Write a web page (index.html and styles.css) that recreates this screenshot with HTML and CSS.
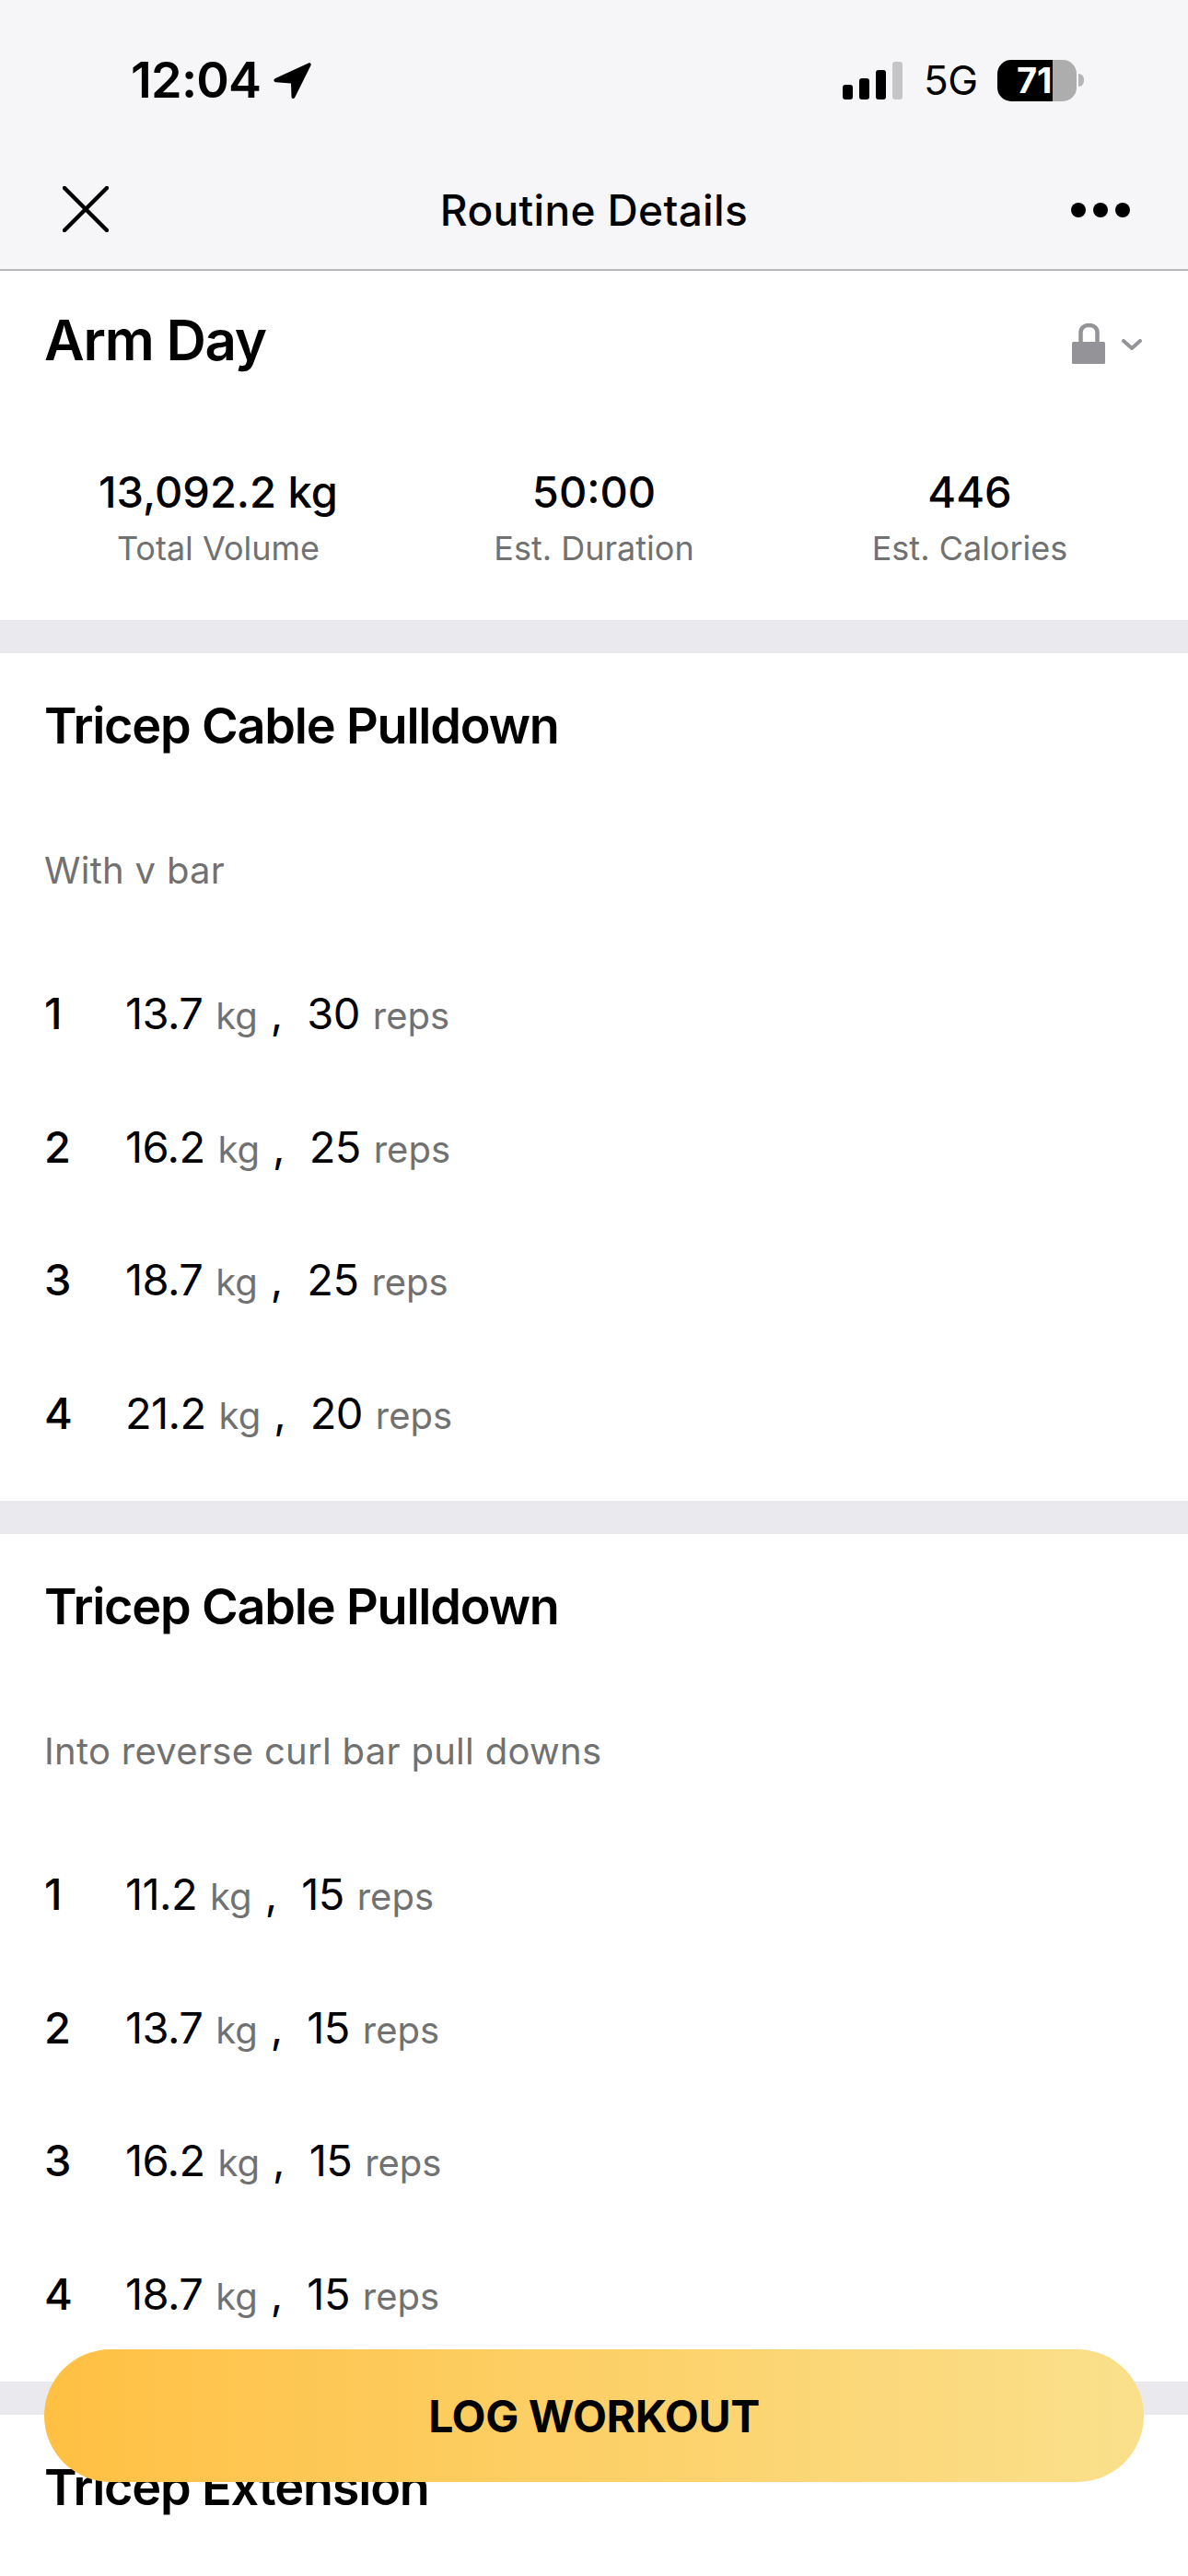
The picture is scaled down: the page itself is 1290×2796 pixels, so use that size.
FILE: index.html
```html
<!DOCTYPE html>
<html lang="en">
<head>
<meta charset="utf-8">
<title>Routine Details</title>
<link rel="stylesheet" href="styles.css">
</head>
<body>
<div class="screen">
  <header class="top">
    <div class="status">
      <div class="status-left">
        <span class="time">12:04</span>
        <svg class="loc" viewBox="0 0 42 40"><path d="M39 1.5 3 18c-2.5 1.200-2 4 .8 4.200L20 23.500l.5 14.500c.1 2.400 3 2.800 3.800.5L41.500 4c.7-2-.7-3.300-2.500-2.500Z"/></svg>
      </div>
      <div class="status-right">
        <svg class="signal" viewBox="0 0 65 41"><rect x="0" y="25" width="11" height="16" rx="3"/><rect x="18" y="18" width="11" height="23" rx="3"/><rect x="36" y="9" width="11" height="32" rx="3"/><rect class="off" x="54" y="0" width="11" height="41" rx="3"/></svg>
        <span class="net">5G</span>
        <div class="battery">
          <div class="cell"><span class="pct">71</span></div>
          <div class="nub"></div>
        </div>
      </div>
    </div>
    <div class="nav">
      <svg class="close" viewBox="0 0 50 50"><path d="M2 2 48 48M48 2 2 48"/></svg>
      <h1 class="nav-title">Routine Details</h1>
      <div class="more"><i></i><i></i><i></i></div>
    </div>
  </header>

  <section class="summary">
    <div class="summary-head">
      <h2 class="name">Arm Day</h2>
      <div class="privacy">
        <svg class="lock" viewBox="0 0 36 44"><path class="shackle" d="M9.500 22V10c0-5 3.500-8 9-8s9 3 9 8v12"/><rect x="0" y="20" width="36" height="24" rx="1.500"/></svg>
        <svg class="chev" viewBox="0 0 22 12"><path d="M2 2l9 8 9-8"/></svg>
      </div>
    </div>
    <div class="stats">
      <div class="stat"><div class="stat-val">13,092.2 kg</div><div class="stat-lab">Total Volume</div></div>
      <div class="stat"><div class="stat-val">50:00</div><div class="stat-lab">Est. Duration</div></div>
      <div class="stat"><div class="stat-val">446</div><div class="stat-lab">Est. Calories</div></div>
    </div>
  </section>

  <section class="exercise">
    <h3 class="ex-title">Tricep Cable Pulldown</h3>
    <p class="ex-note">With v bar</p>
    <ol class="sets">
      <li class="set"><span class="idx">1</span><span class="val">13.7</span><span class="unit">kg</span><span class="comma">,</span><span class="val">30</span><span class="unit">reps</span></li>
      <li class="set"><span class="idx">2</span><span class="val">16.2</span><span class="unit">kg</span><span class="comma">,</span><span class="val">25</span><span class="unit">reps</span></li>
      <li class="set"><span class="idx">3</span><span class="val">18.7</span><span class="unit">kg</span><span class="comma">,</span><span class="val">25</span><span class="unit">reps</span></li>
      <li class="set"><span class="idx">4</span><span class="val">21.2</span><span class="unit">kg</span><span class="comma">,</span><span class="val">20</span><span class="unit">reps</span></li>
    </ol>
  </section>

  <section class="exercise">
    <h3 class="ex-title">Tricep Cable Pulldown</h3>
    <p class="ex-note">Into reverse curl bar pull downs</p>
    <ol class="sets">
      <li class="set"><span class="idx">1</span><span class="val">11.2</span><span class="unit">kg</span><span class="comma">,</span><span class="val">15</span><span class="unit">reps</span></li>
      <li class="set"><span class="idx">2</span><span class="val">13.7</span><span class="unit">kg</span><span class="comma">,</span><span class="val">15</span><span class="unit">reps</span></li>
      <li class="set"><span class="idx">3</span><span class="val">16.2</span><span class="unit">kg</span><span class="comma">,</span><span class="val">15</span><span class="unit">reps</span></li>
      <li class="set"><span class="idx">4</span><span class="val">18.7</span><span class="unit">kg</span><span class="comma">,</span><span class="val">15</span><span class="unit">reps</span></li>
    </ol>
  </section>

  <section class="exercise">
    <h3 class="ex-title">Tricep Extension</h3>
  </section>

  <button class="log">LOG WORKOUT</button>
</div>
</body>
</html>
```
FILE: styles.css
```css
* { box-sizing: border-box; }
html, body { margin: 0; padding: 0; background: #fff; }
body { font-family: Inter, "Liberation Sans", sans-serif; color: #000; }
.screen { position: relative; width: 1290px; height: 2796px; overflow: hidden; background: #fff; }
h1, h2, h3, p, ol { margin: 0; padding: 0; }
ol { list-style: none; }

.top { height: 294px; background: #f6f6f8; border-bottom: 2px solid #b8b8b8; }
.status { height: 174px; padding: 61px 113px 0 142px; display: flex; justify-content: space-between; align-items: flex-start; }
.status-left { display: flex; align-items: center; gap: 13px; height: 52px; }
.time { font-size: 54px; line-height: 52px; font-weight: 600; letter-spacing: -.8px; }
.loc { width: 42px; height: 40px; fill: #000; }
.status-right { display: flex; align-items: center; height: 52px; }
.signal { width: 65px; height: 41px; fill: #000; margin-right: 23px; }
.signal .off { fill: #c5c5c8; }
.net { font-size: 44px; line-height: 52px; font-weight: 400; width: 80px; letter-spacing: -.5px; }
.battery { display: flex; align-items: center; }
.cell { width: 86px; height: 45px; border-radius: 15px; background: linear-gradient(90deg, #000 70%, #adadad 70%); padding-left: 21px; }
.pct { font-size: 38px; line-height: 45px; font-weight: 700; color: #fff; display: block; }
.nub { width: 6px; height: 14px; margin-left: 2px; border-radius: 0 6px 6px 0; background: #b5b5b5; }

.nav { height: 118px; padding: 0 63px; display: grid; grid-template-columns: 1fr auto 1fr; align-items: start; }
.close { width: 50px; height: 50px; margin: 28px 0 0 5px; fill: none; stroke: #000; stroke-width: 4.500; stroke-linecap: round; }
.nav-title { font-size: 46px; font-weight: 500; line-height: 56px; margin-top: 26px; letter-spacing: .35px; }
.more { display: flex; justify-content: flex-end; gap: 8px; margin-top: 46px; }
.more i { display: block; width: 16px; height: 16px; border-radius: 50%; background: #000; }

.summary { height: 415px; padding: 0 50px 0 48px; border-bottom: 36px solid #eaeaee; }
.summary-head { display: flex; justify-content: space-between; align-items: flex-start; padding-top: 39px; }
.name { font-size: 60px; line-height: 72px; font-weight: 600; letter-spacing: -1.2px; }
.privacy { display: flex; gap: 18px; align-items: flex-start; padding-top: 18px; }
.lock { width: 36px; height: 44px; fill: #949498; }
.lock .shackle { fill: none; stroke: #949498; stroke-width: 4.500; }
.chev { width: 22px; height: 12px; margin-top: 17px; fill: none; stroke: #949498; stroke-width: 4; stroke-linecap: round; stroke-linejoin: round; }
.stats { display: grid; grid-template-columns: repeat(3, 408px); margin: 101px 0 0 -15px; text-align: center; }
.stat-val { font-size: 47px; line-height: 56px; font-weight: 500; }
.stat-lab { font-size: 36px; line-height: 44px; margin-top: 11px; color: #717171; }

.exercise { height: 956px; padding: 0 48px; border-bottom: 36px solid #eaeaee; }
.ex-title { font-size: 54px; line-height: 66px; font-weight: 600; padding-top: 46px; letter-spacing: -1.2px; box-sizing: content-box; }
.ex-note { font-size: 40px; line-height: 50px; color: #717171; margin-top: 99px; letter-spacing: .3px; }
.sets { margin-top: 100px; }
.set { height: 144.500px; display: flex; align-items: baseline; line-height: 60px; }
.idx { font-size: 47px; font-weight: 500; width: 88px; }
.val { font-size: 47px; font-weight: 400; letter-spacing: -.6px; }
.unit { font-size: 40px; color: #717171; margin-left: 14px; }
.comma { font-size: 47px; margin: 0 26px 0 14px; }

.log { position: absolute; left: 48px; top: 2550px; width: 1194px; height: 144px; border: 0; border-radius: 72px; background: linear-gradient(90deg, #ffc043, #fae08c); font-family: inherit; font-size: 48px; font-weight: 700; letter-spacing: -.4px; color: #000; padding: 0; }
```
